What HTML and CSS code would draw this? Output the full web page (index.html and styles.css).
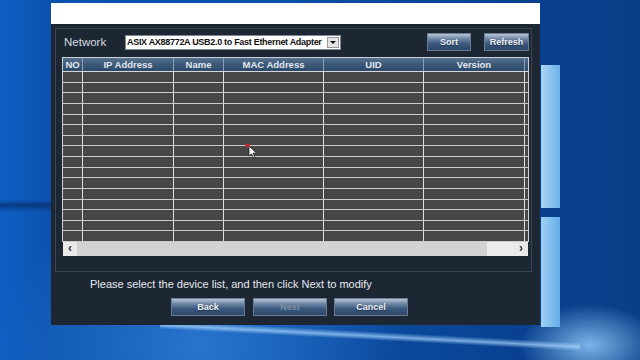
FILE: index.html
```html
<!DOCTYPE html>
<html lang="en">
<head>
  <meta charset="UTF-8">
  <meta name="viewport" content="width=device-width, initial-scale=1.0">
  <title>Device Search</title>
  <link rel="stylesheet" href="styles.css">
</head>
<body>
  <div class="window">
    <div class="titlebar"></div>
    <div class="dialog">
      <div class="panel">
        <div class="toolbar">
          <span class="label">Network</span>
          <div class="select">
            <span class="select-text">ASIX AX88772A USB2.0 to Fast Ethernet Adapter</span>
            <span class="select-arrow"></span>
          </div>
          <button class="btn btn-sort">Sort</button>
          <button class="btn">Refresh</button>
        </div>

        <div class="grid" id="grid">
          <div class="row head">
            <div class="cell">NO</div>
            <div class="cell">IP Address</div>
            <div class="cell">Name</div>
            <div class="cell">MAC Address</div>
            <div class="cell">UID</div>
            <div class="cell">Version</div>
            <div class="cell"></div>
          </div>
        </div>
        <div class="hscroll">
          <span class="hs-arrow">&lsaquo;</span>
          <span class="hs-thumb"></span>
          <span class="hs-track"></span>
          <span class="hs-arrow">&rsaquo;</span>
        </div>
      </div>

      <p class="hint">Please select the device list, and then click Next to modify</p>
      <div class="actions">
        <button class="btn btn-wide">Back</button>
        <button class="btn btn-wide" disabled>Next</button>
        <button class="btn btn-wide">Cancel</button>
      </div>
    </div>
  </div>

  <!-- mouse pointer -->
  <svg class="cursor" width="12" height="14" viewBox="0 0 12 14">
    <path d="M1 1 L1 11 L3.5 8.8 L5.5 13 L7 12.3 L5 8.2 L8.5 8.2 Z" fill="#fff" stroke="#222" stroke-width="0.8"/>
  </svg>
  <span class="click-dot"></span>

  <script>
    // empty device rows
    const grid = document.getElementById('grid');
    for (let i = 0; i < 16; i++) {
      const row = document.createElement('div');
      row.className = 'row';
      for (let c = 0; c < 7; c++) {
        const cell = document.createElement('div');
        cell.className = 'cell';
        row.appendChild(cell);
      }
      grid.appendChild(row);
    }
  </script>
</body>
</html>
```

FILE: styles.css
```css
body {
  margin: 0;
  width: 640px;
  height: 360px;
  overflow: hidden;
  position: relative;
  font-family: "Liberation Sans", Arial, sans-serif;
  padding-top: 3px;
  box-sizing: border-box;
  background-color: #0b4da6;
  background-image:
    linear-gradient(to right, #a9d4f4, #6fb3ea),
    linear-gradient(to right, #9fcff4, #66aee8),
    linear-gradient(183deg, transparent 40%, rgba(170, 215, 255, 0.7) 47%, transparent 53%),
    radial-gradient(ellipse at 590px 345px, rgba(150, 210, 255, 0.8), transparent 70px),
    radial-gradient(ellipse at 200px 345px, rgba(60, 140, 230, 0.6), transparent 200px),
    linear-gradient(to bottom, transparent 200px, rgba(5, 35, 90, 0.6) 205px, transparent 212px),
    linear-gradient(to right, #0e5fc2 0px, #0b52ae 50px, #0b4ea5 300px, #093f8d 560px, #0a3e88 640px);
  background-size: 19px 143px, 19px 110px, 420px 44px, 100% 100%, 100% 100%, 51px 100%, 100% 100%;
  background-position: 541px 65px, 541px 217px, 160px 316px, 0 0, 0 0, 0 0, 0 0;
  background-repeat: no-repeat;
}

.window {
  margin-left: 51px;
  width: 489px;
}

.titlebar {
  height: 21px;
  background-color: #ffffff;
}

.dialog {
  height: 301px;
  background-color: #1d2734;
  padding: 4px 0 0 4px;
  box-sizing: border-box;
}

.panel {
  width: 477px;
  height: 244px;
  box-sizing: border-box;
  border: 1px solid #3a4554;
  padding: 4px 2px 0 6px;
}

.toolbar {
  display: flex;
  align-items: center;
  height: 18px;
}

.label {
  width: 61px;
  padding-left: 2px;
  font-size: 11.5px;
  color: #d5dbe2;
}

.select {
  width: 216px;
  height: 15px;
  box-sizing: border-box;
  background-color: #ffffff;
  border: 1px solid #7f8a96;
  display: flex;
  align-items: center;
}

.select-text {
  flex: 1;
  padding-left: 1px;
  font-size: 9px;
  font-weight: bold;
  letter-spacing: -0.3px;
  color: #111;
  white-space: nowrap;
  overflow: hidden;
}

.select-arrow {
  width: 12px;
  height: 11px;
  margin-right: 1px;
  background-color: #e4e4e4;
  border: 1px solid #9a9a9a;
  box-sizing: border-box;
  position: relative;
}

.select-arrow::after {
  content: "";
  position: absolute;
  left: 2px;
  top: 3px;
  border-left: 3px solid transparent;
  border-right: 3px solid transparent;
  border-top: 3px solid #111;
}

.btn {
  height: 18px;
  width: 44px;
  padding: 0;
  border: 1px solid #6b7d92;
  background: linear-gradient(to bottom, #b8c6d6 0%, #6e86a4 30%, #3c5a80 60%, #2a4668 100%);
  color: #eef2f6;
  font-family: "Liberation Sans", Arial, sans-serif;
  font-size: 9px;
  font-weight: bold;
  text-shadow: 0 1px 1px rgba(0, 0, 0, 0.5);
  cursor: pointer;
}

.btn-sort {
  margin-left: auto;
  margin-right: 13px;
}

.toolbar .btn:last-child {
  width: 45px;
}

.btn:disabled {
  color: #7d8ea2;
  text-shadow: none;
}

.grid {
  margin-top: 6px;
  width: 467px;
  border-left: 1px solid #cfd3d8;
  border-right: 1px solid #cfd3d8;
  box-sizing: border-box;
}

.row {
  display: grid;
  grid-template-columns: 20px 91px 50px 100px 100px 101px 1fr;
  height: 10.625px;
  box-sizing: border-box;
  background-color: #474747;
  border-bottom: 1px solid #cbcbcb;
}

.row .cell {
  border-right: 1px solid #dedede;
}

.row .cell:last-child {
  border-right: none;
}

.row.head {
  height: 15px;
  border-top: 1px solid #c9d0d8;
  background: linear-gradient(to bottom, #58728f 0%, #3b5878 50%, #2e4a6a 100%);
  border-bottom: 1px solid #d5d9de;
}

.head .cell {
  font-size: 9.5px;
  font-weight: bold;
  color: #e3e8ee;
  text-align: center;
  line-height: 13px;
  border-right-color: #8d9fb4;
}

.hscroll {
  width: 465px;
  margin-left: 1px;
  height: 14px;
  display: flex;
  background-color: #e9e9e9;
}

.hs-arrow {
  width: 14px;
  font-size: 12px;
  line-height: 13px;
  text-align: center;
  color: #333;
  font-weight: bold;
}

.hs-thumb {
  width: 410px;
  background-color: #d2d2d2;
}

.hs-track {
  flex: 1;
  background-color: #ececec;
}

.hint {
  margin: 5px 0 0 35px;
  font-size: 11px;
  line-height: 14px;
  color: #e6e9ec;
}

.actions {
  display: flex;
  gap: 8px;
  margin: 7px 0 0 120px;
}

.btn-wide {
  width: 74px;
}

.actions .btn:first-child {
  margin-left: -4px;
}

.actions .btn:last-child {
  margin-left: -1px;
}

.cursor {
  position: absolute;
  left: 248px;
  top: 145px;
}

.click-dot {
  position: absolute;
  left: 245px;
  top: 144px;
  width: 5px;
  height: 3px;
  border-radius: 50%;
  background-color: #d8262a;
}
```
